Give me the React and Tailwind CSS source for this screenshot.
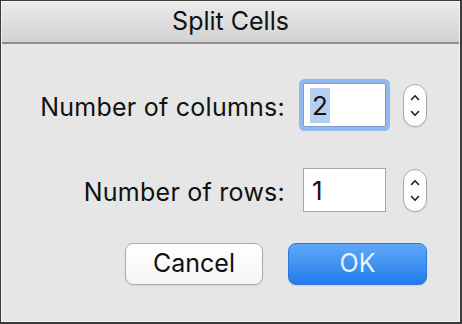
const FONT = { fontFamily: 'Inter, "Liberation Sans", sans-serif' }

function Stepper() {
  return (
    <div className="ml-[17px] flex h-[43px] w-[24px] flex-col items-center justify-center gap-[9px] rounded-full border border-[#a9a9a9] bg-[#fdfdfd] shadow-[0_1px_1px_rgba(0,0,0,0.08)]">
      <svg width="10" height="7" viewBox="0 0 10 7" fill="none">
        <path d="M1.5 5.5 L5 1.8 L8.5 5.5" stroke="#1e1e1e" strokeWidth="1.6" strokeLinecap="round" strokeLinejoin="round" />
      </svg>
      <svg width="10" height="7" viewBox="0 0 10 7" fill="none">
        <path d="M1.5 1.5 L5 5.2 L8.5 1.5" stroke="#1e1e1e" strokeWidth="1.6" strokeLinecap="round" strokeLinejoin="round" />
      </svg>
    </div>
  )
}

function Field({ label, value, focused }) {
  return (
    <div className="flex items-center justify-end">
      <span className="mr-[18px] mt-[6px] text-[25px] tracking-[0.01em] text-[#111]">{label}</span>
      {focused ? (
        <div className="flex h-[44px] w-[83px] items-center rounded-[2px] border border-[#7c9ccd] bg-white pl-[6px] shadow-[0_0_0_4px_#92b9ec]">
          <span className="bg-[#b5cff0] px-[2px] text-[26px] leading-[35px] text-[#111]">{value}</span>
        </div>
      ) : (
        <div className="flex h-[44px] w-[83px] items-center border border-[#a6a6a6] bg-white pl-[8px] text-[26px] text-[#111]">
          {value}
        </div>
      )}
      <Stepper />
    </div>
  )
}

export default function App() {
  return (
    <div className="h-[324px] w-[462px] bg-[#3b3b3b] pl-[1px] pr-[2px] pt-[1px] pb-[2px]" style={FONT}>
      <div className="flex h-full flex-col border border-[#f4f4f4] bg-[#e6e6e6]">
        <div className="flex h-[42px] items-center justify-center border-b-2 border-[#8e8e8e] bg-gradient-to-b from-[#ebebeb] to-[#d2d2d2] text-[25px] text-[#111]">
          Split Cells
        </div>
        <div className="flex flex-1 flex-col pr-[32px]">
          <div className="mt-[39px]">
            <Field label="Number of columns:" value="2" focused />
          </div>
          <div className="mt-[41px]">
            <Field label="Number of rows:" value="1" />
          </div>
          <div className="mt-[31px] flex justify-end gap-[25px]">
            <button className="h-[42px] w-[138px] rounded-[8px] border border-[#ababab] bg-gradient-to-b from-white to-[#f4f4f4] text-[25px] text-[#111] shadow-[0_1px_1px_rgba(0,0,0,0.08)]">
              Cancel
            </button>
            <button className="h-[42px] w-[139px] rounded-[8px] border border-[#2f78d8] bg-gradient-to-b from-[#5fa8f7] to-[#1f7cee] text-[25px] text-[#e9f3ff] shadow-[0_1px_1px_rgba(0,0,0,0.1)]">
              OK
            </button>
          </div>
        </div>
      </div>
    </div>
  )
}
